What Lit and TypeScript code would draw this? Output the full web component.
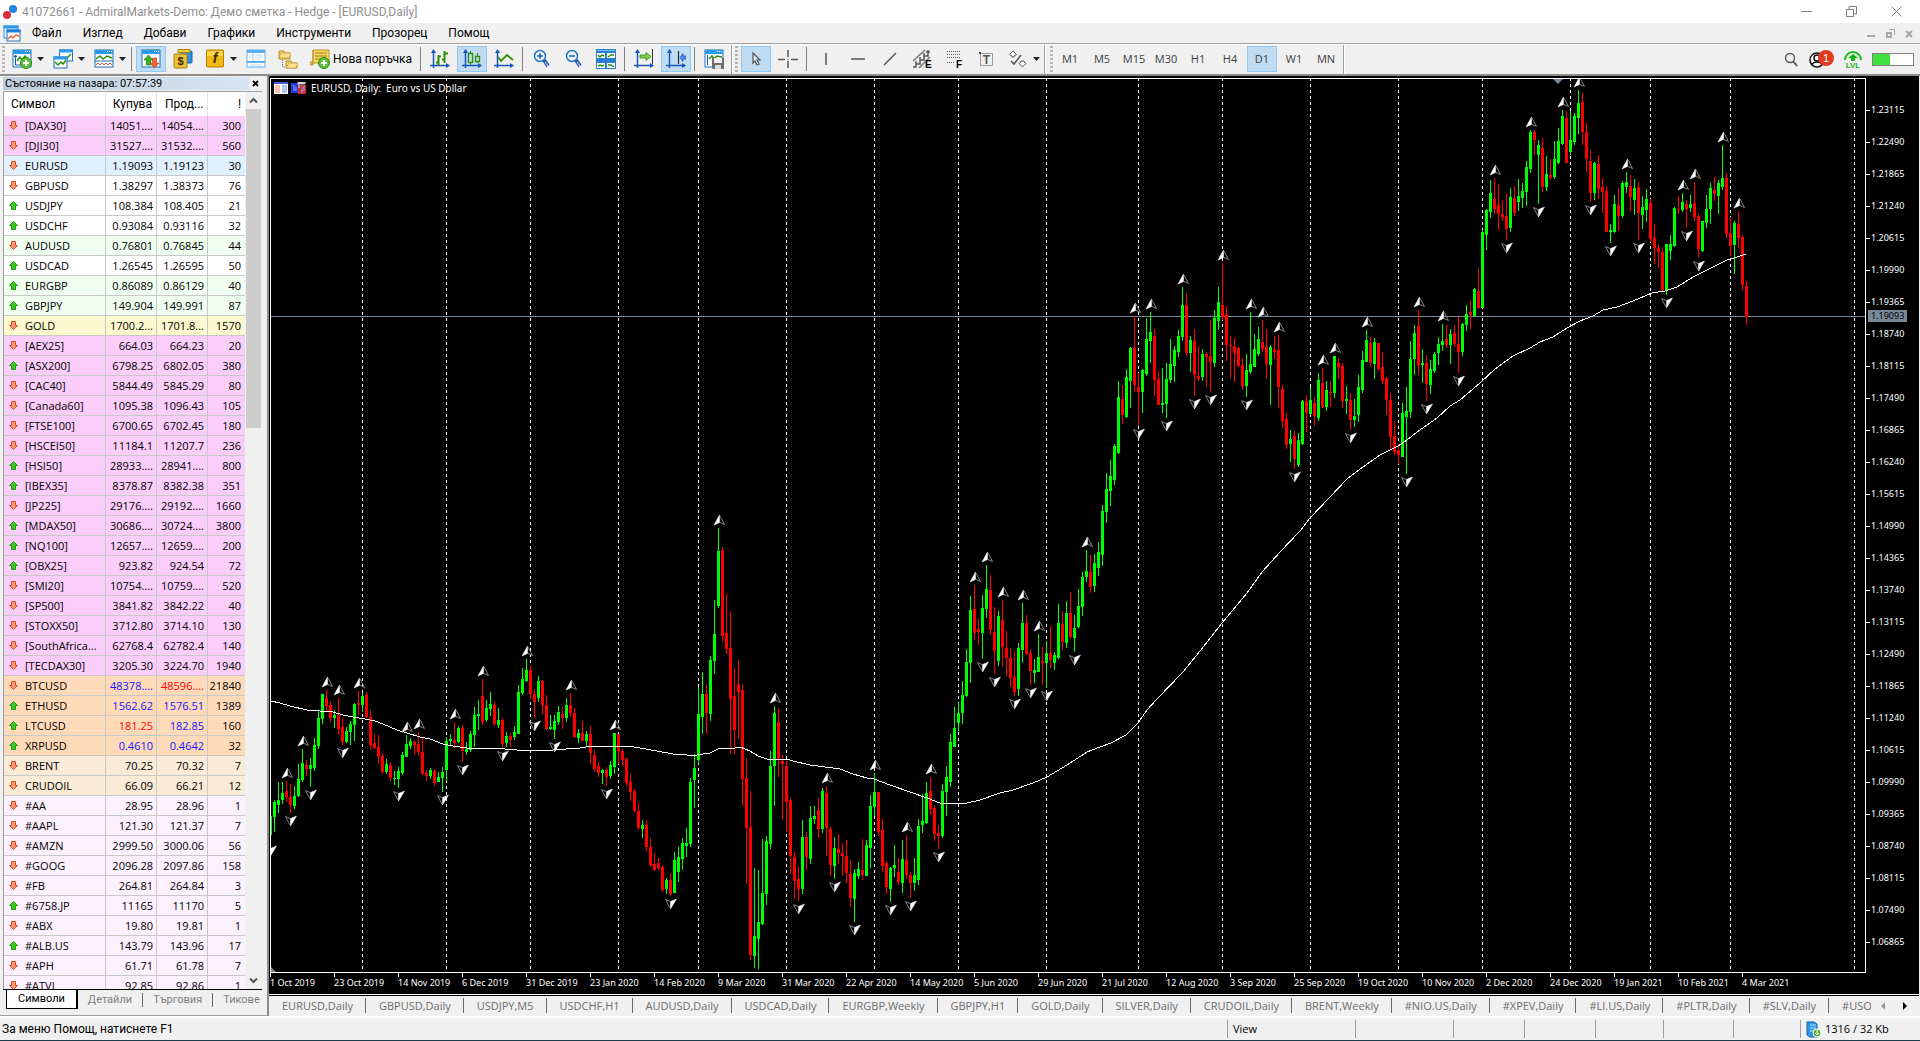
import { LitElement, html, svg, css } from "lit";
import { customElement, state } from "lit/decorators.js";
import { classMap } from "lit/directives/class-map.js";

type Quote = [string, string, string, string, string, string, string?, string?];

// symbol, direction, row tint, bid, ask, spread, bid colour, ask colour
const QUOTES: Quote[] = [
  ["[DAX30]", "d", "pink", "14051....", "14054....", "300"],
  ["[DJI30]", "d", "pink", "31527....", "31532....", "560"],
  ["EURUSD", "d", "blue", "1.19093", "1.19123", "30"],
  ["GBPUSD", "d", "white", "1.38297", "1.38373", "76"],
  ["USDJPY", "u", "white", "108.384", "108.405", "21"],
  ["USDCHF", "u", "white", "0.93084", "0.93116", "32"],
  ["AUDUSD", "d", "green", "0.76801", "0.76845", "44"],
  ["USDCAD", "u", "white", "1.26545", "1.26595", "50"],
  ["EURGBP", "u", "green", "0.86089", "0.86129", "40"],
  ["GBPJPY", "u", "green", "149.904", "149.991", "87"],
  ["GOLD", "d", "gold", "1700.2...", "1701.8...", "1570"],
  ["[AEX25]", "d", "pink", "664.03", "664.23", "20"],
  ["[ASX200]", "u", "pink", "6798.25", "6802.05", "380"],
  ["[CAC40]", "d", "pink", "5844.49", "5845.29", "80"],
  ["[Canada60]", "d", "pink", "1095.38", "1096.43", "105"],
  ["[FTSE100]", "d", "pink", "6700.65", "6702.45", "180"],
  ["[HSCEI50]", "d", "pink", "11184.1", "11207.7", "236"],
  ["[HSI50]", "u", "pink", "28933....", "28941....", "800"],
  ["[IBEX35]", "u", "pink", "8378.87", "8382.38", "351"],
  ["[JP225]", "d", "pink", "29176....", "29192....", "1660"],
  ["[MDAX50]", "u", "pink", "30686....", "30724....", "3800"],
  ["[NQ100]", "u", "pink", "12657....", "12659....", "200"],
  ["[OBX25]", "u", "pink", "923.82", "924.54", "72"],
  ["[SMI20]", "d", "pink", "10754....", "10759....", "520"],
  ["[SP500]", "d", "pink", "3841.82", "3842.22", "40"],
  ["[STOXX50]", "d", "pink", "3712.80", "3714.10", "130"],
  ["[SouthAfrica...", "d", "pink", "62768.4", "62782.4", "140"],
  ["[TECDAX30]", "d", "pink", "3205.30", "3224.70", "1940"],
  ["BTCUSD", "d", "orange", "48378....", "48596....", "21840", "up", "down"],
  ["ETHUSD", "u", "orange", "1562.62", "1576.51", "1389", "up", "up"],
  ["LTCUSD", "u", "orange", "181.25", "182.85", "160", "down", "up"],
  ["XRPUSD", "u", "orange", "0.4610", "0.4642", "32", "up", "up"],
  ["BRENT", "d", "linen", "70.25", "70.32", "7"],
  ["CRUDOIL", "d", "linen", "66.09", "66.21", "12"],
  ["#AA", "d", "lilac", "28.95", "28.96", "1"],
  ["#AAPL", "d", "lilac", "121.30", "121.37", "7"],
  ["#AMZN", "d", "lilac", "2999.50", "3000.06", "56"],
  ["#GOOG", "d", "lilac", "2096.28", "2097.86", "158"],
  ["#FB", "d", "lilac", "264.81", "264.84", "3"],
  ["#6758.JP", "u", "lilac", "11165", "11170", "5"],
  ["#ABX", "d", "lilac", "19.80", "19.81", "1"],
  ["#ALB.US", "u", "lilac", "143.79", "143.96", "17"],
  ["#APH", "d", "lilac", "61.71", "61.78", "7"],
  ["#ATVI", "d", "lilac", "92.85", "92.86", "1"],
];

// Bars are grouped in blocks. Each bar is colour + high, body top, body
// bottom, low, measured downwards in thirds of a pixel from the block's base.
const BLOCKS: { base: number; bars: string }[] = [
  { base: 1920, bars: `
G528,528,584,609 G480,486,530,575 G426,480,494,518 G426,459,480,492 R423,453,471,486 R432,471,495,518
G438,468,498,507 G372,417,468,471 G327,369,420,426 R360,376,387,407 G354,375,387,440 G293,316,384,392
G210,234,318,326 G162,162,237,252 R150,174,198,212 R183,195,234,245 G210,225,234,264 R174,225,267,284
R234,261,306,315 G261,273,306,309 G243,252,275,315 G188,192,255,303 R153,188,195,225 G158,168,195,215
R156,165,231,235 R210,231,315,330 R282,309,324,327 R285,321,350,372 R339,348,396,402 G357,372,396,402
R366,375,414,422 G393,413,417,434 G381,393,417,444 G336,345,399,404 G285,312,350,350 G294,303,318,326
R300,306,315,345 R276,312,336,347 R291,336,402,405 R390,399,408,423 G384,390,408,417 R387,393,429,438
G396,411,426,426 G381,396,414,455 G291,303,390,423 G282,297,303,318 R246,299,309,323 G258,264,306,309
R255,264,333,365 G306,327,336,345 G273,282,330,336 G201,225,285,321 G180,222,227,270 R117,168,246,255
G180,204,240,245 G156,192,207,227 R186,195,252,258 G204,240,254,264 R234,240,312,323 G276,288,309,321
R279,288,299,321 G258,276,291,300 G135,156,282,282 G84,117,159,165 G57,90,123,126 R78,90,162,177
R147,162,186,234 G108,123,174,186 R120,123,195,222 R165,195,267,270 G225,261,267,270 G225,243,270,297
G198,216,246,255 R201,222,234,267 G174,195,234,246 R159,195,219,231 R204,219,291,294 G267,279,294,309
R242,279,303,303 G273,282,303,321 R258,282,339,371 R330,345,387,395 R366,378,399,411 G386,390,399,432
R381,390,411,437 G363,375,408,417 G279,279,381,402 R282,282,333,372 R327,333,360,377 R351,357,429,438
R402,426,456,483 R447,453,513,516 R489,513,564,570 G540,555,567,593 R540,555,621,632 R594,621,675,682
R639,672,690,693 R654,669,684,690 R675,681,750,756 G714,720,747,762 R699,720,762,767 G636,660,759,759
G620,651,696,726 G594,609,657,690 G564,609,618,651 G414,426,612,620 G342,384,420,503` },
  { base: 1500, bars: `
G561,642,780,791 G516,582,651,702 R555,582,639,702 G468,480,642,662 G300,402,483,521 G84,153,318,323
R141,150,408,426 R282,399,447,462 R333,444,597,762 R504,588,690,762 R480,552,576,717 R555,570,837,918
R774,834,984,1152 R873,981,1365,1380 G1104,1308,1368,1403 G1110,1266,1317,1407 G1017,1179,1272,1275
G1008,1023,1182,1215 G753,798,1032,1047 G618,639,798,918 R624,666,780,831 R765,783,792,960 R783,798,906,996
R894,900,1068,1121 R1056,1071,1143,1197 R1098,1137,1167,1203 G960,1011,1167,1182 R996,1011,1071,1110
G918,954,1077,1092 G918,948,957,972 R894,930,987,1014 G864,873,987,999 R858,879,984,1068 R981,987,1095,1128
G1011,1044,1098,1137 R1002,1047,1059,1092 R1029,1059,1068,1128 R1020,1068,1119,1149 R1080,1122,1194,1221
G1107,1119,1197,1266 G1086,1107,1128,1137 R1017,1110,1125,1140 G1020,1035,1128,1128 G885,918,1044,1104
G819,876,921,948 R876,876,996,1008 R957,990,1098,1116 R1083,1089,1161,1182 G1101,1104,1167,1206
G1035,1095,1104,1131 R1074,1116,1146,1155 G1020,1077,1149,1179 R1005,1080,1125,1137 R1116,1125,1149,1194
G1074,1125,1149,1173 G957,978,1140,1155 G882,963,975,999 G846,879,969,972 R831,873,927,945 R915,924,1002,1023
R975,999,1008,1047 G852,873,1008,1014 G798,831,876,948 G702,726,846,861 G621,684,741,741 G609,639,669,693
G543,585,639,672 G447,486,588,591 G288,330,489,549 R255,327,399,420 R354,387,396,435 G285,324,399,477
G195,267,327,354 R225,270,390,405 R321,396,453,522 G333,348,483,498 R300,360,441,498 R393,444,474,528
R444,474,534,561 R453,531,576,588 G429,444,567,588 G309,369,450,489 R345,369,462,465 R447,459,513,555
G477,510,519,549 G402,471,516,516 R441,483,489,555 G423,459,489,563 R378,459,480,504 G456,465,489,510
G312,369,474,477 R333,372,426,450 G303,339,429,444 R276,339,411,417 G345,384,414,456 G267,318,381,384
G216,231,321,348 G150,213,231,246 R165,216,261,279 G162,189,258,276` },
  { base: 660, bars: `
G966,996,1044,1068 G855,873,1005,1038 G759,807,876,909 G720,768,813,858 G672,678,780,795 G483,531,699,702
R495,537,585,612 G447,471,591,594 G381,384,483,564 R288,384,495,516 R459,501,516,618 G447,450,516,579
G294,357,462,468 G276,336,363,429 R327,348,480,528 R453,477,555,555 G444,549,555,579 G429,477,552,594
G357,432,480,489 G378,390,438,486 G330,348,396,411 G201,255,351,363 R219,255,399,411 G348,360,399,456
R327,363,465,528 R378,468,477,483 G387,402,471,483 R396,402,411,501 R300,408,426,516 G270,294,429,441
G201,246,303,330 R129,255,291,300 R258,282,375,423 R348,375,378,474 R354,378,399,486 R381,384,438,441
R414,435,498,510 G402,450,498,531 G276,432,456,462 G342,387,441,441 G321,357,402,408 R300,366,387,396
R327,381,432,477 G375,381,435,555 R348,387,396,417 R345,390,501,564 R495,507,603,624 R579,597,675,687
G630,657,672,726 R633,648,717,747 G639,660,735,741 G540,543,672,675 R525,543,579,636 G501,540,582,585
R531,549,588,618 G459,480,594,603 R444,489,561,564 G483,510,561,573 R483,516,519,561 G408,408,519,534
R414,429,441,477 R429,438,543,564 G498,537,543,582 R519,540,600,630 G537,588,600,621 G465,501,585,606
G393,420,510,519 G330,360,426,426 R351,369,429,441 G354,366,432,477 R369,369,447,453 R396,441,483,492
R471,474,540,585 R519,540,651,687 R603,648,696,705 R672,690,705,732 G549,579,711,711 G501,573,591,762
G363,417,576,594 G315,339,417,465 R270,318,438,465 G387,429,435,489 R405,429,492,543 G420,447,495,522
G396,402,453,459 G351,372,399,435 G312,363,375,393 R315,357,375,384 G327,342,375,432 R315,339,372,381
R291,372,396,459 G309,312,396,408 G255,282,315,333 R240,276,285,327 G204,207,288,291` },
  { base: 210, bars: `
R594,663,714,717 G480,486,714,714 G417,420,495,540 G330,369,426,444 R324,387,417,432 R342,405,432,480
R390,432,441,453 R372,438,477,510 G354,381,474,486 R348,384,429,438 G327,378,396,423 G339,363,384,414
G273,291,366,408 G180,186,297,309 R180,186,210,255 G210,225,255,402 R204,234,351,366 G258,312,351,363
R267,315,324,330 G213,267,321,327 G174,213,279,282 G120,138,222,225 R123,144,279,279 G123,210,246,255
G129,138,216,225 G60,99,144,192 R69,96,186,225 R159,186,267,306 R240,273,369,396 G276,279,369,390
R255,282,357,387 R324,351,366,429 R348,363,486,486 G462,480,486,519 G375,402,486,489 R354,405,438,483
G333,339,438,444 G306,336,351,369 R315,348,381,423 G327,354,390,435 R336,351,429,510 G378,411,435,477
G357,387,420,456 R387,399,507,516 R462,504,534,582 R522,534,546,594 R531,546,660,663 G522,522,663,675
G495,522,543,570 G411,414,528,531 R378,417,420,432 G369,396,420,426 R390,402,417,474 G375,402,414,426
R336,399,441,453 R432,438,537,564 G453,453,543,546 G375,417,459,474 G339,354,417,462 R321,360,372,393
G330,339,378,432 G225,324,351,360 R309,324,492,504 R441,489,528,558 G453,459,525,612 R423,462,504,534
R495,501,645,660 R633,648,741,765` },
];

const TOP = 79;
const STEP = 4;

interface Bar { up: boolean; high: number; top: number; bottom: number; low: number; }

const BARS: Bar[] = BLOCKS.flatMap(({ base, bars }) =>
  bars.trim().split(/\s+/).map((b) => {
    const [high, top, bottom, low] = b.slice(1).split(",").map((v) => Math.round((base + Number(v)) / 3) - TOP);
    return { up: b[0] === "G", high, top, bottom, low };
  })
);

const barX = (i: number) => i * STEP - 1;

const candlePath = (up: boolean) =>
  BARS.map((b, i) =>
    b.up !== up ? "" :
    `M${barX(i)} ${b.high}h1V${b.low}h-1zM${barX(i) - 1} ${b.top}h3V${Math.max(b.bottom, b.top + 1)}h-3z`
  ).join("");

const FRACTALS_UP = [4, 8, 14, 17, 22, 34, 37, 46, 53, 64, 75, 86, 112, 126, 139, 151, 159, 165, 176, 179, 183, 188,
  192, 204, 216, 220, 228, 238, 245, 248, 252, 263, 266, 274, 287, 293, 306, 315, 323, 327, 339, 353, 356, 363, 367];
const FRACTALS_DOWN = [0, 5, 10, 18, 32, 43, 48, 58, 66, 71, 84, 100, 122, 132, 141, 146, 155, 160, 167, 178, 181, 186,
  190, 194, 201, 217, 224, 231, 235, 244, 256, 270, 284, 289, 297, 309, 317, 330, 335, 342, 349, 354, 357];

// Bar numbers at which a new month begins.
const MONTHS = [23, 44, 65, 87, 107, 129, 151, 172, 194, 217, 238, 260, 282, 303, 325, 345, 365, 396];

// Moving average, x and y in plot pixels.
const AVERAGE = `0,622 9,624 19,627 36,631 49,632 62,633 72,636 82,638 94,640 104,642 112,645 126,651 136,654 149,658
159,660 172,665 182,667 196,669 222,669 246,671 262,671 282,671 309,669 322,667 339,668 357,667 369,669 386,672
402,675 416,676 426,676 439,674 449,669 464,669 469,668 479,672 487,677 496,680 516,680 522,682 539,686 569,690
582,695 596,699 603,700 619,706 639,713 656,719 669,724 696,724 709,721 729,714 742,711 762,704 776,698 796,686
816,673 829,668 840,664 855,656 867,644 876,631 886,620 912,593 929,572 951,544 976,514 991,493 1009,473 1029,452
1039,439 1059,418 1076,400 1092,388 1109,376 1127,367 1136,361 1146,353 1166,339 1179,327 1189,321 1209,304
1224,290 1242,277 1259,269 1269,263 1282,258 1296,249 1309,242 1322,237 1332,231 1346,228 1362,222 1381,214
1394,212 1406,208 1422,198 1442,188 1456,181 1466,178 1475,175`;

const PRICES = Array.from({ length: 27 }, (_, i) => (1.23115 - i * 0.00625).toFixed(5));
const DATES = ["1 Oct 2019", "23 Oct 2019", "14 Nov 2019", "6 Dec 2019", "31 Dec 2019", "23 Jan 2020", "14 Feb 2020",
  "9 Mar 2020", "31 Mar 2020", "22 Apr 2020", "14 May 2020", "5 Jun 2020", "29 Jun 2020", "21 Jul 2020", "12 Aug 2020",
  "3 Sep 2020", "25 Sep 2020", "19 Oct 2020", "10 Nov 2020", "2 Dec 2020", "24 Dec 2020", "19 Jan 2021",
  "10 Feb 2021", "4 Mar 2021"];
const CHART_TABS = ["EURUSD,Daily", "GBPUSD,Daily", "USDJPY,M5", "USDCHF,H1", "AUDUSD,Daily", "USDCAD,Daily",
  "EURGBP,Weekly", "GBPJPY,H1", "GOLD,Daily", "SILVER,Daily", "CRUDOIL,Daily", "BRENT,Weekly", "#NIO.US,Daily",
  "#XPEV,Daily", "#LI.US,Daily", "#PLTR,Daily", "#SLV,Daily", "#USO,Daily"];
const MENUS = ["Файл", "Изглед", "Добави", "Графики", "Инструменти", "Прозорец", "Помощ"];
const FRAMES = ["M1", "M5", "M15", "M30", "H1", "H4", "D1", "W1", "MN"];

const frame = svg`<rect x="1" y="1" width="18" height="17" fill="#fff" stroke="#1c6fb8"/><path d="M1 1h18v4H1z" fill="#2b97e6"/><path d="M13 2.500h1M15 2.500h1M17 2.500h1" stroke="#fff"/>`;
const plus = svg`<circle cx="14" cy="14" r="5.500" fill="#5fc33a" stroke="#2b8a14"/><path d="M14 11v6M11 14h6" stroke="#fff" stroke-width="2"/>`;
const axes = svg`<path d="M3.500 1v18M0 16.500h19" stroke="#1657b5" stroke-width="1.500"/><path d="M1 4l2.500-4L6 4zM16 14l4 2.500-4 2.500z" fill="#1657b5"/>`;

const ICONS: Record<string, unknown> = {
  newChart: svg`${frame}<path d="M3.500 6v10h12M2 8l1.500-2L5 8" fill="none" stroke="#1657b5"/><path d="M5 12l3-4 2 3 3-4 4 5" fill="none" stroke="#2d8f06" stroke-width="1.500"/>${plus}`,
  profiles: svg`<rect x="6.500" y="1" width="13" height="11" fill="#fff" stroke="#1c6fb8"/><path d="M6 .5h14v3H6z" fill="#2b97e6"/><path d="M14 9l4-4" stroke="#2d8f06" stroke-width="1.500"/><rect x="1" y="8" width="13" height="11" fill="#fff" stroke="#1c6fb8"/><path d="M.5 7.500h14v3H.5z" fill="#2b97e6"/><path d="M2 13l3 3 3-3 2 2 3-4" fill="none" stroke="#2d8f06" stroke-width="1.500"/>`,
  indicators: svg`${frame}<path d="M2 10l4-3 3 3 4-3 5 2" fill="none" stroke="#2d8f06" stroke-width="1.500"/><path d="M1 12h18" stroke="#1c6fb8"/><path d="M2 16l2-2 2 2 2-2 2 2 2-2 2 2 2-2 2 2" fill="none" stroke="#d2553a"/>`,
  market: svg`${frame}<path d="M7.500 6l4.500 5H9.500v5h-4v-5H3z" fill="#35b51c" stroke="#1d7a0c" stroke-width=".7"/><path d="M13.500 19l-4.500-5h2.500V9h4v5H18z" fill="#f2683c" stroke="#b93a17" stroke-width=".7"/>`,
  dollar: svg`<rect x="8" y="2" width="11" height="12" rx="1" fill="#2d8fe0" stroke="#155fa8"/><path d="M5 .5h12v3H5z" fill="#f2c844" stroke="#a9810e"/><rect x="1" y="5" width="13" height="14" rx="1" fill="#ecc03b" stroke="#a9810e"/><text x="7.500" y="16" text-anchor="middle" font-size="11" font-weight="700" fill="#3a2c00">$</text>`,
  editor: svg`<rect x="1.500" y="1" width="17" height="17" rx="1" fill="#f3b913" stroke="#b07f00"/><path d="M2 2h16v5H2z" fill="#ffdf62" opacity=".7"/><text x="10" y="14" text-anchor="middle" font-size="14" font-style="italic" font-weight="700" font-family="Liberation Serif, serif" fill="#3a2800">f</text>`,
  panels: svg`<rect x="1" y="1" width="18" height="17" fill="#fff" stroke="#5aaeec"/><path d="M1 1h18v3H1zM1 12h18v2H1z" fill="#5aaeec"/><path d="M7 4v8" stroke="#8bc6f2"/><path d="M3 6h3M3 8h3M9 6h8M9 8h8M9 10h5M3 16h12" stroke="#c3dff6"/>`,
  folders: svg`<path d="M1 2h5l1 2h5v6H1zM8 12h5l1 2h5v5H8z" fill="#f4cc57" stroke="#b8922a"/><path d="M3 4h10l-2 5H1zM11 14h9l-2 5H8z" fill="#fbe08a" stroke="#b8922a" stroke-width=".6"/><path d="M4.500 11v7h3" fill="none" stroke="#777" stroke-dasharray="1 1"/>`,
  order: svg`<path d="M3 1h16v13H3z" fill="#f8d75e" stroke="#b8922a"/><path d="M3 1v15H0V13h3" fill="#e6b93a" stroke="#b8922a"/><path d="M5 4h12M5 7h12M5 10h8" stroke="#9c7a1c"/>${plus}`,
  bars: svg`${axes}<path d="M8.500 6v10M6 13.500h2.500M8.500 7.500H11M14.500 2v12M12 10.500h2.500M14.500 4.500H18" stroke="#2d8f06" stroke-width="2"/>`,
  candles: svg`${axes}<path d="M8.500 2v14M15.500 4v10" stroke="#2d8f06"/><path d="M6.500 4.500h4v9h-4zM13.500 7.500h4v5h-4z" fill="#c0dcf3" stroke="#2d8f06" stroke-width="1.300"/>`,
  line: svg`${axes}<path d="M4 8l3 4 6-6 6 5" fill="none" stroke="#2d8f06" stroke-width="1.800"/>`,
  zoomIn: svg`<path d="M12 11l4 6" stroke="#1d5fa8" stroke-width="4"/><path d="M13 13l3 4" stroke="#dfe9f5" stroke-width="1"/><circle cx="8" cy="7" r="5.500" fill="#eaf6ff" stroke="#2a72c0" stroke-width="1.500"/><path d="M8 4v6M5 7h6" stroke="#1d5fa8" stroke-width="1.500"/>`,
  zoomOut: svg`<path d="M12 11l4 6" stroke="#1d5fa8" stroke-width="4"/><path d="M13 13l3 4" stroke="#dfe9f5" stroke-width="1"/><circle cx="8" cy="7" r="5.500" fill="#eaf6ff" stroke="#2a72c0" stroke-width="1.500"/><path d="M5 7h6" stroke="#1d5fa8" stroke-width="1.500"/>`,
  tile: svg`<path d="M0 0h20v20H0z" fill="#2b7fd0"/><path d="M1 4h8v5H1zM11 4h8v5h-8zM1 14h8v5H1zM11 14h8v5h-8z" fill="#fff"/><path d="M1 1h18v1H1z" fill="#7cc0f5"/><path d="M2 6l2 2 2-2 2 1M12 8l3-2h3M2 17l2-1 2 1 2-1M12 16h3l3 2" fill="none" stroke="#2d8f06" stroke-width="1.500"/>`,
  shift: svg`${axes}<path d="M18.500 0v15" stroke="#333"/><path d="M6 6h6V3.500L17 7.500l-5 4V9H6z" fill="#7ccf4a" stroke="#2d8f06" stroke-width=".8"/>`,
  autoscroll: svg`${axes}<path d="M12.500 2v13" stroke="#333" stroke-width="1.300"/><path d="M20 7h-3V4.500l-3 4 3 4V10h3z" fill="#4b8df0" stroke="#1657b5" stroke-width=".8"/>`,
  template: svg`${frame}<path d="M3.500 6v10" stroke="#1657b5"/><path d="M5 10l3-3 2 3 3-3 5 1" fill="none" stroke="#2d8f06" stroke-width="1.500"/><path d="M8 9h12v11H9l-1-1z" fill="#6d6d6d"/><path d="M10 9h8v5h-8z" fill="#eee"/><path d="M11 16h6v4h-6z" fill="#ddd"/>`,
  cursor: svg`<path d="M7 4l7 7h-3l2 4-2 1-2-4-2 2z" fill="#dfe6ec" stroke="#555" stroke-width="1.200"/>`,
  cross: svg`<path d="M10 1v7M10 12v7M0 10.500h7M13 10.500h7M9.500 10.500h1" stroke="#555" stroke-width="1.500"/>`,
  vline: svg`<path d="M10 4v12" stroke="#555" stroke-width="1.500"/>`,
  hline: svg`<path d="M3 10h14" stroke="#555" stroke-width="1.500"/>`,
  trend: svg`<path d="M4 16L16 4" stroke="#555" stroke-width="1.500"/>`,
  channel: svg`<path d="M1 12L13 1M7 19L18 8" stroke="#777" stroke-width="1.500"/><path d="M1 18h3v-6M4 15h4V8M8 11h4V4M12 7h4V1M14 3h4" fill="none" stroke="#555" stroke-width="1.500"/><text x="13" y="19" font-size="10" font-weight="700" fill="#000">E</text>`,
  fibo: svg`<path d="M3 2.500h14M3 5.500h14M3 8.500h14M3 13.500h8" stroke="#555" stroke-dasharray="1 1"/><text x="12" y="19" font-size="10" font-weight="700" fill="#000">F</text>`,
  text: svg`<path d="M4.500 4.500h12v12h-12z" fill="none" stroke="#444" stroke-dasharray="1 1"/><rect x="3" y="3" width="2" height="2" fill="#444"/><text x="10.500" y="15" text-anchor="middle" font-size="12" font-weight="700" font-family="Liberation Serif, serif" fill="#555">T</text>`,
  shapes: svg`<path d="M4 7L1.500 5.500 5 2l3.500 3.500L6 7v1H4zM13 12v1l-2 1.500 3.500 3.500 3.500-3.500-2-1.500v-1z" fill="#fff" stroke="#555"/><path d="M3 12l3 3 7-9" fill="none" stroke="#555" stroke-width="1.500"/>`,
};

const icon = (name: string) => html`<svg class="icon" width="20" height="20" aria-hidden="true">${ICONS[name]}</svg>`;

@customElement("app-root")
export class AppRoot extends LitElement {
  @state() private timeframe = "D1";

  static styles = css`
    :host {
      display: flex; flex-direction: column; height: 100vh; overflow: hidden;
      background: #f0f0f0; color: #000;
      font: 11px/20px "Open Sans", "Noto Sans", sans-serif;
    }
    * { box-sizing: border-box; }
    button {
      border: 0; margin: 0; padding: 0; background: none; color: inherit; font: inherit; white-space: nowrap;
    }
    svg { display: block; flex: none; }
    svg text { font-family: "Liberation Sans", sans-serif; }
    .titlebar, .menubar, .tool.order, th, .help { font-family: Roboto, "Open Sans", sans-serif; font-size: 12px; }
    .titlebar { display: flex; align-items: center; height: 23px; background: #fff; color: #8f8f8f; padding: 0 18px 0 2px; gap: 3px; flex: none; }
    .titlebar h1 { flex: 1; margin: 0; font-size: 12px; font-weight: 400; }
    .winbtns { display: flex; gap: 34px; }
    .menubar { display: flex; align-items: center; height: 20px; padding: 0 6px 0 3px; flex: none; }
    .menus { display: flex; gap: 21px; margin-left: 11px; flex: 1; }
    .mdi { display: flex; gap: 10px; }
    .toolbar { display: flex; align-items: center; height: 33px; border-top: 1px solid #a0a0a0; border-bottom: 2px solid #8c8c8c; box-shadow: inset 0 1px #fff; flex: none; }
    .grip { width: 3px; height: 26px; margin: 0 1px 0 2px; background: repeating-linear-gradient(#b4b4b4 0 2px, transparent 2px 4px); flex: none; }
    .end { width: 2px; height: 29px; margin: 0 2px 0 1px; border-left: 1px solid #a0a0a0; border-right: 1px solid #fff; flex: none; }
    .grip.inner { margin: 0 2px 0 0; }
    .sep { width: 1px; height: 24px; margin: 0 3px 0 2px; background: #808080; flex: none; }
    .tool { display: flex; align-items: center; justify-content: center; width: 30px; height: 26px; margin: 0 1px; border: 1px solid transparent; flex: none; }
    .tool.on { background: #c0dcf3; border-color: #90c8f6; }
    .tool.drop { width: 39px; justify-content: flex-start; gap: 5px; padding-left: 4px; }
    .tool.order { width: 112px; justify-content: flex-start; gap: 3px; padding-left: 4px; }
    .tool.tf { color: #404040; }
    .right { display: flex; align-items: center; gap: 9px; margin-left: auto; padding-right: 6px; }
    .meter { width: 42px; height: 13px; border: 1px solid #808080; background: linear-gradient(90deg, #40e040 17px, #fff 17px); }
    .body { flex: 1; display: flex; min-height: 0; }
    .side { width: 267px; padding: 1px 5px 6px 3px; display: flex; flex-direction: column; flex: none; border-bottom: 1px solid #a0a0a0; }
    .sidetitle { display: flex; align-items: flex-start; height: 14px; flex: none; }
    .sidetitle h2 { flex: 1; margin: 0; padding-left: 2px; font: 11px/13px Roboto, "Open Sans", sans-serif; background: linear-gradient(90deg, #bfcddb, #d7e4f2); }
    .close { width: 13px; height: 13px; display: flex; justify-content: center; align-items: center; }
    .watch { flex: 1; display: flex; min-height: 0; border: solid #a0a0a0; border-width: 1px 0 0 1px; background: #f0f0f0; }
    .clip { flex: 1; overflow: hidden; }
    table { width: 100%; border-collapse: separate; border-spacing: 0; table-layout: fixed; background: #fff; }
    th { height: 24px; padding: 0 4px 0 0; font-weight: 400; line-height: 22px; text-align: right; border-right: 1px solid #e2e2e2; white-space: nowrap; }
    th:first-child { text-align: left; padding-left: 7px; width: 102px; }
    th:nth-child(2), th:nth-child(3) { width: 51px; }
    th:nth-child(3) { text-align: left; padding-left: 8px; }
    td { height: 20px; padding: 0 3px 0 0; line-height: 19px; text-align: right; border-right: 1px solid #c8c8c8; border-bottom: 1px solid #c8c8c8; white-space: nowrap; overflow: hidden; }
    td:last-child, th:last-child { border-right: 0; padding-right: 4px; }
    td:first-child { text-align: left; padding-left: 5px; }
    .sym { display: flex; align-items: center; gap: 7px; }
    .pink td { background: #facdfa; } .blue td { background: #e1f0ff; } .green td { background: #f0fff0; }
    .gold td { background: #fdf8cd; } .orange td { background: #ffdab9; } .linen td { background: #faebd7; }
    .lilac td { background: #fdf0ff; }
    .up { color: #1414ff; } .down { color: #ff0000; }
    .scroll { width: 17px; display: flex; flex-direction: column; align-items: center; padding-right: 1px; flex: none; }
    .scroll button { height: 17px; width: 15px; display: grid; place-items: center; }
    .track { flex: 1; width: 15px; }
    .thumb { height: 37%; background: #cdcdcd; }
    .sidetabs { display: flex; height: 20px; border-top: 1px solid #000; overflow: hidden; color: #808080; padding-left: 3px; align-items: center; flex: none; font-family: Roboto, "Open Sans", sans-serif; font-size: 11px; }
    .sidetabs button { padding: 0 10px; line-height: 14px; border-right: 1px solid #696969; flex: none; }
    .sidetabs button.on { background: #fff; color: #000; border: solid #000; border-width: 0 2px 2px 1px; line-height: 18px; height: 20px; padding: 0 11px; }
    .sidetabs button:last-child { border-right: 0; }
    .main { flex: 1; min-width: 0; display: flex; flex-direction: column; border-left: 2px solid #8c8c8c; padding-right: 1px; }
    .chart { flex: 1; min-height: 0; background: #000; color: #fff; display: grid; grid-template: minmax(0, 1fr) 21px / minmax(0, 1fr) 53px; padding: 2px 0 0 1px; font: 9px/12px "Noto Sans", sans-serif; }
    .plot { border: 1px solid #fff; position: relative; overflow: hidden; }
    .plot svg.bars { width: 100%; height: 100%; }
    .caption { position: absolute; left: 3px; top: 3px; display: flex; align-items: center; gap: 3px; font-size: 10px; }
    .caption span { margin-left: 2px; white-space: pre; }
    .prices { position: relative; padding-top: 16px; overflow: hidden; }
    .price { height: 32px; display: flex; align-items: center; gap: 1px; }
    .price::before { content: ""; width: 4px; height: 1px; background: #fff; }
    .last { position: absolute; left: 2px; top: 232px; height: 12px; padding: 0 3px; background: #778899; color: #000; }
    .dates { grid-column: 1 / 3; display: flex; overflow: hidden; }
    .date { width: 64px; flex: none; white-space: nowrap; }
    .date::before { content: ""; display: block; width: 1px; height: 4px; background: #fff; }
    .charttabs { height: 22px; display: flex; align-items: center; border-top: 1px solid #fff; box-shadow: inset 0 1px #000; color: #6d6d6d; flex: none; }
    .tablist { flex: 1; display: flex; overflow: hidden; }
    .tablist button { padding: 0 12px 0 13px; line-height: 15px; border-right: 1px solid #696969; flex: none; }
    .tabnav { display: flex; gap: 16px; padding: 0 12px 0 10px; }
    .status { height: 25px; margin: 0; display: grid; grid-template-columns: minmax(0, 1fr) 128px 98px 71px 71px 68px 70px 67px 120px; align-items: center; border-top: 2px solid #fff; border-bottom: 1px solid #1d3a4a; flex: none; }
    .status > div { height: 18px; line-height: 18px; padding-left: 5px; border-left: 1px solid #a0a0a0; display: flex; align-items: center; gap: 3px; }
    .status > div:first-child { border: 0; padding-left: 2px; }
    .status > div:last-child { padding-left: 4px; }
  `;

  private tool(name: string, label: string, on = false) {
    return html`<button class=${classMap({ tool: true, on })} aria-label=${label}>${icon(name)}</button>`;
  }

  private drop(name: string, label: string) {
    return html`<button class="tool drop" aria-label=${label}>${icon(name)}
      <svg width="7" height="4" aria-hidden="true"><path d="M0 0h7L3.500 4z" fill="#222" /></svg></button>`;
  }

  private arrow(dir: string) {
    return dir === "u"
      ? html`<svg width="9" height="9" role="img" aria-label="up"><path d="M4.500 .5l4 4H6.500v4h-4v-4H.5z" fill="#3cc81e" stroke="#1c9a10" /></svg>`
      : html`<svg width="9" height="9" role="img" aria-label="down"><path d="M4.500 8.500l4-4H6.500v-4h-4v4H.5z" fill="#f79a76" stroke="#dc4a20" /></svg>`;
  }

  private renderToolbar() {
    const sep = html`<span class="sep"></span>`;
    return html`<div class="toolbar">
      <span class="grip"></span>
      ${this.drop("newChart", "Нова графика")}${this.drop("profiles", "Профили")}${this.drop("indicators", "Индикатори")}
      ${sep}${this.tool("market", "Състояние на пазара", true)}${this.tool("dollar", "Символи")}${this.drop("editor", "Редактор")}
      ${this.tool("panels", "Инструменти")}${this.tool("folders", "Навигатор")}
      <button class="tool order">${icon("order")}Нова поръчка</button>
      ${sep}${this.tool("bars", "Барове")}${this.tool("candles", "Свещи", true)}${this.tool("line", "Линия")}
      ${sep}${this.tool("zoomIn", "Увеличи")}${this.tool("zoomOut", "Намали")}${this.tool("tile", "Подреди")}
      ${sep}${this.tool("shift", "Отместване")}${this.tool("autoscroll", "Автоматично превъртане", true)}
      ${sep}${this.tool("template", "Шаблони")}
      <span class="end"></span><span class="grip inner"></span>
      ${this.tool("cursor", "Курсор", true)}${this.tool("cross", "Кръст")}
      ${sep}${this.tool("vline", "Вертикална линия")}${this.tool("hline", "Хоризонтална линия")}${this.tool("trend", "Тренд линия")}
      ${this.tool("channel", "Канал")}${this.tool("fibo", "Фибоначи")}${this.tool("text", "Текст")}${this.drop("shapes", "Обекти")}
      <span class="end"></span><span class="grip"></span>
      ${FRAMES.map((f) => html`<button class=${classMap({ tool: true, tf: true, on: f === this.timeframe })}
        @click=${() => (this.timeframe = f)}>${f}</button>`)}
      <span class="end"></span>
      <div class="right">
        <button aria-label="Търсене"><svg width="15" height="15"><circle cx="6" cy="6" r="4.500" fill="none" stroke="#555" stroke-width="1.300" /><path d="M9 9l4 5" stroke="#555" stroke-width="2" /></svg></button>
        <button aria-label="Акаунт"><svg width="26" height="20">
          <circle cx="9" cy="11" r="7" fill="#fff" stroke="#111" stroke-width="1.500" /><circle cx="9" cy="9" r="3" fill="none" stroke="#111" stroke-width="1.500" />
          <path d="M4 16c1-4 9-4 10 0" fill="none" stroke="#111" stroke-width="1.500" />
          <circle cx="18" cy="9" r="8" fill="#e03a20" /><text x="18" y="13" text-anchor="middle" font-size="11" fill="#fff">1</text></svg></button>
        <button aria-label="Ниво"><svg width="20" height="20">
          <path d="M2 11a8 8 0 0 1 16 0" fill="none" stroke="#14c014" stroke-width="2" /><path d="M10 5l5 4h-3v3H8V9H5z" fill="#14b414" />
          <text x="10" y="19" text-anchor="middle" font-size="8" font-weight="700" fill="#14b414">LVL</text></svg></button>
        <span class="meter"></span>
      </div>
    </div>`;
  }

  private renderSide() {
    return html`<section class="side">
      <div class="sidetitle"><h2>Състояние на пазара: 07:57:39</h2>
        <button class="close" aria-label="Затвори"><svg width="7" height="7"><path d="M1 1l5 5M6 1L1 6" stroke="#000" stroke-width="1.800" /></svg></button></div>
      <div class="watch">
        <div class="clip"><table>
          <thead><tr><th>Символ</th><th>Купува</th><th>Прод...</th><th>!</th></tr></thead>
          <tbody>${QUOTES.map(([name, dir, tint, bid, ask, spread, bc = "", ac = ""]) => html`
            <tr class=${tint}><td><span class="sym">${this.arrow(dir)}${name}</span></td>
              <td class=${bc}>${bid}</td><td class=${ac}>${ask}</td><td>${spread}</td></tr>`)}</tbody>
        </table></div>
        <div class="scroll">
          <button aria-label="Нагоре"><svg width="9" height="7"><path d="M1 5.500L4.500 2 8 5.500" fill="none" stroke="#555" stroke-width="2" /></svg></button>
          <div class="track"><div class="thumb"></div></div>
          <button aria-label="Надолу"><svg width="9" height="7"><path d="M1 1.500L4.500 5 8 1.500" fill="none" stroke="#555" stroke-width="2" /></svg></button>
        </div>
      </div>
      <div class="sidetabs"><button class="on">Символи</button><button>Детайли</button><button>Търговия</button><button>Тикове</button></div>
    </section>`;
  }

  private renderPlot() {
    const up = (i: number) => svg`<g transform="translate(${barX(i) - 4} ${BARS[i].high - 13})">
      <path d="M5.500 0L0 10l5.500-2.500z" fill="#fff" stroke="#fff" stroke-width=".5"/><path d="M6 1l4.500 8.500L6 7.500" fill="none" stroke="#8a8478"/></g>`;
    const down = (i: number) => svg`<g transform="translate(${barX(i) - 5} ${BARS[i].low + 3})">
      <path d="M5.500 10L11.500 0l-6 2.500z" fill="#fff" stroke="#fff" stroke-width=".5"/><path d="M5 9L.5.5 5 2.500" fill="none" stroke="#84848e"/></g>`;
    return html`<div class="plot">
      <svg class="bars" role="img" aria-label="EURUSD, Daily">
        <g stroke="#fff" stroke-dasharray="3 3" stroke-dashoffset="1" shape-rendering="crispEdges">
          ${MONTHS.map((m) => svg`<line x1=${barX(m) + 0.5} x2=${barX(m) + 0.5} y1="0" y2="100%"/>`)}
        </g>
        <rect x="0" y="237" width="100%" height="1" fill="#778899" />
        <path d=${candlePath(true)} fill="#00ff00" shape-rendering="crispEdges" />
        <path d=${candlePath(false)} fill="#ff0000" shape-rendering="crispEdges" />
        <polyline points=${AVERAGE} fill="none" stroke="#fff" shape-rendering="crispEdges" />
        ${FRACTALS_UP.map(up)}${FRACTALS_DOWN.map(down)}
        <path d="M1282 0h10l-5 5z" fill="#778899" />
        <svg y="100%" overflow="visible"><path d="M0 0v-5l5 5z" fill="#778899" /></svg>
      </svg>
      <div class="caption">
        <svg width="14" height="12"><path d="M0 0h14v12H0z" fill="#fff" /><path d="M0 0h14v2H0z" fill="#4a5ad8" /><path d="M1 4h5M1 6h5M1 8h5M1 10h5" stroke="#f08060" /><path d="M8 4h5M8 6h5M8 8h5M8 10h5" stroke="#7088e8" /></svg>
        <svg width="15" height="12"><path d="M0 1h8v10H0z" fill="#2a3ae0" /><path d="M7 3h8v9H7z" fill="#d03030" /><path d="M3 3v6M5 5v4M11 5v6M13 4v5" stroke="#8fa0ff" /><path d="M7 0h7v2H7zM8 2v4" stroke="#ccc" fill="#ddd" /></svg>
        <span>EURUSD, Daily:  Euro vs US Dollar</span>
      </div>
    </div>
    <div class="prices">${PRICES.map((p) => html`<div class="price">${p}</div>`)}<div class="last">1.19093</div></div>
    <div class="dates">${DATES.map((d) => html`<div class="date">${d}</div>`)}</div>`;
  }

  render() {
    return html`
      <header class="titlebar">
        <svg width="17" height="18" aria-hidden="true"><circle cx="11" cy="6" r="4" fill="#2484e0" /><circle cx="5" cy="12" r="4" fill="#d8303a" /></svg>
        <h1>41072661 - AdmiralMarkets-Demo: Демо сметка - Hedge - [EURUSD,Daily]</h1>
        <div class="winbtns">
          <button aria-label="Минимизирай"><svg width="11" height="11"><path d="M0 5.500h11" stroke="#808080" /></svg></button>
          <button aria-label="Възстанови"><svg width="11" height="11"><path d="M.5 3.500h7v7h-7zM3 3V.5h7.500V8H8" fill="none" stroke="#808080" /></svg></button>
          <button aria-label="Затвори"><svg width="11" height="11"><path d="M.5.5l10 10M10.500.5l-10 10" stroke="#808080" /></svg></button>
        </div>
      </header>
      <nav class="menubar">
        <svg width="18" height="17" aria-hidden="true"><rect x="1" y="1" width="14" height="12" fill="#e8f4ff" stroke="#2b97e6" /><path d="M.5.5h15v3H.5z" fill="#2b97e6" /><rect x="4" y="5" width="13" height="11" fill="#fff" stroke="#1c6fb8" /><path d="M3.500 4.500h14v3h-14z" fill="#1c80d8" /><path d="M5 14l3-3 2 2 3-3 3 1" fill="none" stroke="#e86030" stroke-width="1.500" /></svg>
        <div class="menus">${MENUS.map((m) => html`<button>${m}</button>`)}</div>
        <div class="mdi">
          <button aria-label="Минимизирай графиката"><svg width="9" height="9"><path d="M0 7h8" stroke="#a8a8a8" stroke-width="2" /></svg></button>
          <button aria-label="Възстанови графиката"><svg width="9" height="9"><path d="M1 4h4v4H1z" fill="none" stroke="#a8a8a8" stroke-width="2" /><path d="M3 .5h5.500V6" fill="none" stroke="#a8a8a8" /></svg></button>
          <button aria-label="Затвори графиката"><svg width="9" height="9"><path d="M1 2l6 6M7 2L1 8" stroke="#a8a8a8" stroke-width="2" /></svg></button>
        </div>
      </nav>
      ${this.renderToolbar()}
      <div class="body">
        ${this.renderSide()}
        <main class="main">
          <div class="chart">${this.renderPlot()}</div>
          <div class="charttabs">
            <div class="tablist">${CHART_TABS.map((t) => html`<button>${t}</button>`)}</div>
            <div class="tabnav">
              <button aria-label="Назад"><svg width="5" height="8"><path d="M4 0v8L0 4z" fill="#999" /></svg></button>
              <button aria-label="Напред"><svg width="5" height="8"><path d="M1 0v8l4-4z" fill="#000" /></svg></button>
            </div>
          </div>
        </main>
      </div>
      <footer class="status">
        <div class="help">За меню Помощ, натиснете F1</div><div>View</div><div></div><div></div><div></div><div></div><div></div><div></div>
        <div><svg width="17" height="17" aria-hidden="true"><path d="M2 1h7l3 2v13H5l-3-2z" fill="#2b97e6" stroke="#155fa8" /><path d="M5 4h6M5 7h6M5 10h4" stroke="#bfe2ff" /><circle cx="12" cy="12" r="4" fill="#4fae2c" stroke="#fff" /><path d="M12 9v5M10 12l2 2 2-2" fill="none" stroke="#fff" /></svg>1316 / 32 Kb</div>
      </footer>`;
  }
}
